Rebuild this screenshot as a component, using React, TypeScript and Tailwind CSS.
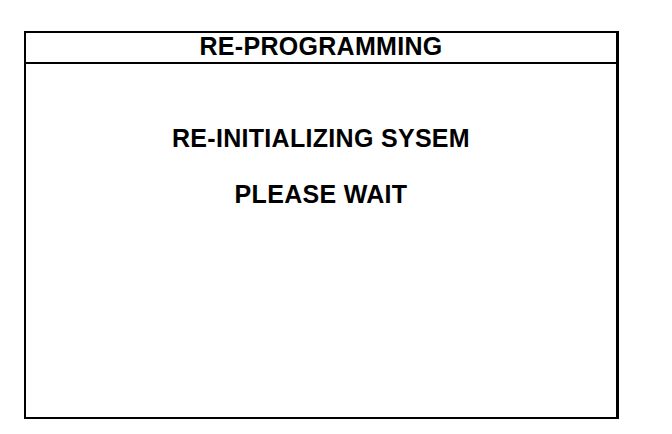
export default function App() {
  return (
    <main className="min-h-screen w-full bg-white pl-[24px] pt-[31px] font-['Liberation_Sans',Arial,sans-serif] font-bold text-black">
      <div className="flex h-[388px] w-[595px] flex-col border-2 border-r-[3px] border-black">
        {/* title bar */}
        <div className="flex h-[31px] shrink-0 justify-center border-b-2 border-black">
          <span className="text-[25px] leading-[27px] tracking-[0.3px]">RE-PROGRAMMING</span>
        </div>
        <div className="flex flex-col items-center pt-[60px] text-[25px] leading-[28px] tracking-[0.3px]">
          <p>RE-INITIALIZING SYSEM</p>
          <p className="mt-[28px]">PLEASE WAIT</p>
        </div>
      </div>
    </main>
  );
}
